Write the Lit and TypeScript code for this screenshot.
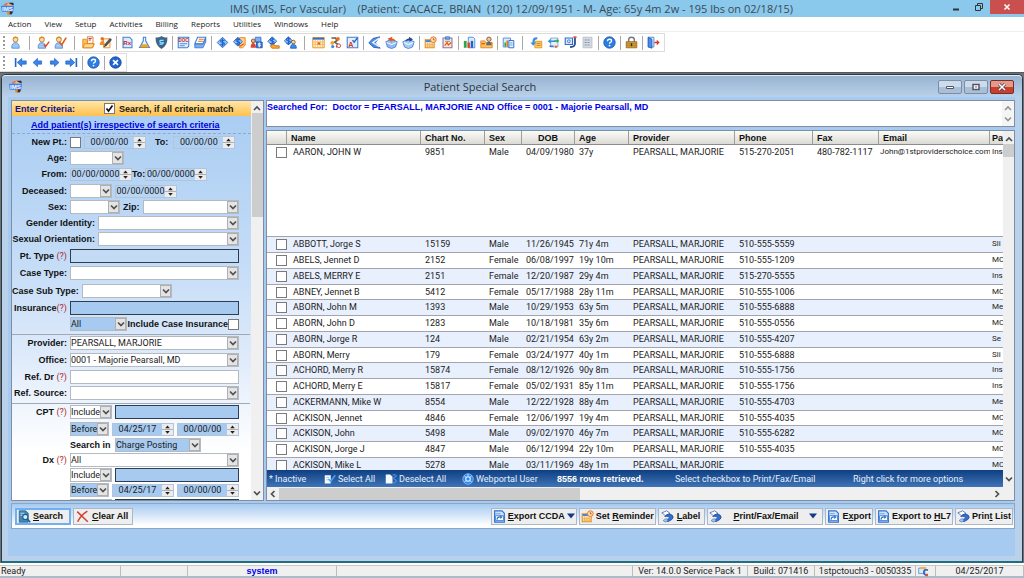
import { LitElement, html, svg, css, nothing, TemplateResult } from "lit";
import { customElement, property } from "lit/decorators.js";
import { classMap } from "lit/directives/class-map.js";

/* ---------- icons (16 x 16 grid) ---------- */
const head = (x: number, y: number) => svg`
  <circle cx=${x} cy=${y} r="3" fill="#fbd9a8" stroke="#b5701c"/>
  <path d="M${x - 3.4} ${y - 0.6}q0-3.4 3.4-3.4t3.4 3.4q-1.6-1.6-3.4-1.4t-3.4 1.4z" fill="#e08a1a"/>
  <path d="M${x - 4.5} ${y + 10.5}q-.6-6.5 4.5-6.8 5.1.3 4.5 6.8z" fill="#9cc8f6" stroke="#4b87d4"/>`;
const page = svg`<path d="M2.5 1.5h8l3 3v10h-11z" fill="#dbeafc" stroke="#3f7ed0" stroke-width="1.3"/>`;
const dollar = (x: number, y: number, r = 5.5) => svg`
  <path d="M${x} ${y - r}l${r} ${r}-${r} ${r}-${r}-${r}z" fill="#8fc0f8" stroke="#1a5fc0"/>
  <path d="M${x + 2.6} ${y - 2.4}q-4.800-1.600-5 .6 0 1.200 2.500 1.700 2.400.6 2.200 2-.6 2.100-5 .7M${x} ${y - 5}v10" fill="none" stroke="#1f62c8" stroke-width="1.4"/>`;
const printer = svg`
  <path d="M1 3.500l6-2.500 4 3-5.500 3z" fill="#fff" stroke="#3c6db5"/>
  <path d="M4.500 8q5-5 9.500-1.500 2.500 3-1 5.500l-4.500 2.500-3-2 3-1.500q3-1 1.500-2.500-2-1-5.500-.5z" fill="#2f6fd0" stroke="#17408c" stroke-width=".8"/>
  <path d="M2.500 13l4-2.500 2.500 2-3.500 2.500z" fill="#9fc4f2" stroke="#3c6db5" stroke-width=".7"/>`;
const exportDoc = svg`
  <path d="M2 1h9l3 3v11h-12z" fill="#cfe3fb" stroke="#2f74d0" stroke-width="1.4"/>
  <path d="M2.500 4.500h7" stroke="#7fb0ee" stroke-width="1.500"/>
  <path d="M3 7h10v6h-10z" fill="#fff" stroke="#2f74d0"/>
  <path d="M5 12q0-3.500 4-3.500" fill="none" stroke="#2f74d0" stroke-width="1.500"/><path d="M8.500 6.500l3.500 2-3 2.500z" fill="#2f74d0"/>`;
const calClock = svg`
  <path d="M1.500 4.500h11v10h-11z" fill="#fff3d6" stroke="#e08a1a" stroke-width="1.3"/>
  <path d="M2 5h10v2.500h-10z" fill="#3f86df"/><path d="M4.500 8v6M7.300 8v6M10 8v6M2 10.200h10M2 12.400h10" stroke="#f0a63c"/>
  <circle cx="11.500" cy="4.500" r="3.500" fill="#ffe2b8" stroke="#e8711c" stroke-width="1.2"/><path d="M11.500 2.500v2.300h1.800" fill="none" stroke="#c2410c"/>`;

const ICONS: Record<string, unknown> = {
  logo: svg`<circle cx="10.500" cy="3.500" r="2.800" fill="#f3b48e"/><path d="M3 4q1-3.500 6-3.200l-2.500 4.200z" fill="#e9774c"/><path d="M9 .8l6 .2 1 3-3.500-1z" fill="#2b2b2b"/>
    <path d="M0 4.500h16l-1 7.500h-14z" fill="#3e7ff0"/><text x="8" y="11" text-anchor="middle" font-family="Liberation Sans" font-weight="700" font-size="7.500" fill="#fff">IMS</text>
    <circle cx="9.500" cy="13.500" r="2.200" fill="#f08a24"/><path d="M11 11.500l4 .5-2 3.500-2.500-.5z" fill="#333"/>`,
  person: head(8, 4.5),
  personCheck: svg`${head(6, 4.5)}<path d="M8.500 10.500l2 2.500 4.500-6" fill="none" stroke="#e0441c" stroke-width="1.700"/>`,
  personCheck2: svg`${head(6, 4.5)}<path d="M6.500 7.500l3 3.500 5.500-9" fill="none" stroke="#e8541c" stroke-width="2"/>`,
  folder: svg`<path d="M6.500 1h7v9h-7z" fill="#fff" stroke="#d9681d"/><path d="M8 3h4M8 5h3" stroke="#d23c28" stroke-width="1.3"/><path d="M1 4h4l1.500 2v3h6l2.500 1-2 4.500h-12z" fill="#ffc35c" stroke="#e07d12"/><path d="M3 9.500h12l-2.500 5h-11z" fill="#ffd98c" stroke="#e07d12"/>`,
  edit: svg`<path d="M5.500 3.500h8v11h-8z" fill="#fff1d8" stroke="#e07d12"/><circle cx="4" cy="3.500" r="2.200" fill="#e8711c"/><path d="M1 11q0-5 3-5t3 5z" fill="#f08c2e"/><path d="M6.500 13.500l1-3.500 6-7 2 1.500-6 7z" fill="#555" stroke="#222" stroke-width=".6"/>`,
  rx: svg`${page}<text x="7.700" y="11.500" text-anchor="middle" font-family="Liberation Sans" font-weight="700" font-size="7.500" fill="#c8281e">Rx</text>`,
  flask: svg`<path d="M6 1.500h4M6.500 2v4l-4.500 8h12l-4.500-8v-4" fill="#e6f2ff" stroke="#3f7ed0" stroke-width="1.3"/><path d="M4.500 10h7l2 4h-11z" fill="#f6a21c"/>`,
  shield: svg`<path d="M8 1q3.500 2 6.500 1.500 .5 8.500-6.500 12.500-7-4-6.500-12.500 3 .5 6.500-1.500z" fill="#2b6a9c" stroke="#53606d" stroke-width="1.500"/><path d="M10.500 5.500q-5-.8-4.500 1.500t4 1q.5 2.700-4.500 2" fill="none" stroke="#9fe0ff" stroke-width="1.500"/>`,
  doc: svg`<path d="M1.500 1.500h13v11l-2 2h-11z" fill="#e3effd" stroke="#3f7ed0" stroke-width="1.3"/><text x="8" y="7.500" text-anchor="middle" font-family="Liberation Sans" font-weight="700" font-size="5.500" fill="#c8281e">DOC</text><path d="M3.500 9.500h9M3.500 12h6" stroke="#4b87d4" stroke-width="1.2"/>`,
  scan: svg`<path d="M4.500 1.500h10l-3.500 8h-10z" fill="#fff" stroke="#3f7ed0" stroke-width="1.3"/><path d="M6 4h6M5 6.500h6" stroke="#e8711c" stroke-width="1.2"/><path d="M1 10h10l3.500-7v4l-3.500 7.500h-10z" fill="#7fb0ee" stroke="#2f6fd0"/>`,
  dollar: dollar(8, 8, 6.5),
  dollarNote: svg`<path d="M8 2h7v9l-3 3.500h-4z" fill="#ffd08a" stroke="#e07d12"/>${dollar(6, 7)}<path d="M8.500 12.500l5-3" stroke="#e8541c" stroke-width="1.500"/>`,
  people: svg`<path d="M6.500 1.500h7v6h-7z" fill="#7fb0ee" stroke="#2f6fd0"/><circle cx="4" cy="6" r="2.300" fill="#f3b67a" stroke="#6b4420"/><path d="M.8 14.500q0-6 3.200-6t3.500 6z" fill="#d8463a"/><path d="M8 7.500h7v7h-7z" fill="#3b78d8" stroke="#1a4fa8"/><path d="M13 9.200q-3-.8-3 .6t3 1.300q0 2-3.200 1M11.500 8v6" fill="none" stroke="#fff"/>`,
  dollarHand: svg`${dollar(6.5, 6.5)}<path d="M4 12q4-3 7 0h4v3h-9z" fill="#f6a83c" stroke="#d0670e"/>`,
  dollarPerson: svg`${dollar(5.5, 6, 5)}<circle cx="11.500" cy="7.500" r="2.300" fill="#fbd9a8" stroke="#7a4a1c"/><path d="M8 15q0-5 3.500-5t3.700 5z" fill="#3b8be6" stroke="#1a5fc0"/>`,
  calendar: svg`<path d="M1 2h14v12.500h-14z" fill="#fff6df" stroke="#e8951c" stroke-width="1.2"/><path d="M1 2h14v2.500h-14z" fill="#3a6cc0"/><path d="M4 5v9M7 5v9M10 5v9M13 5v9M1.500 7.500h13M1.500 10.500h13" stroke="#f6b45a"/><path d="M7 8h3v2.500h-3z" fill="#e8541c"/>`,
  branch: svg`<path d="M3 2.500h5l2 3-3 2 4 3-2 3.500" fill="none" stroke="#6b5b50" stroke-width="2"/><circle cx="11" cy="3.500" r="2.300" fill="#e8711c"/><circle cx="4" cy="8.500" r="2.300" fill="#f6a21c"/><circle cx="12" cy="12" r="2.300" fill="#fff" stroke="#d8463a" stroke-width="1.2"/><circle cx="4.500" cy="13" r="2" fill="#3b8be6"/>`,
  aCheck: svg`<path d="M1.500 1.500h13v13h-13z" fill="#e3effd" stroke="#3f7ed0" stroke-width="1.3"/><text x="6" y="13" text-anchor="middle" font-family="Liberation Sans" font-weight="700" font-size="9" fill="#d8361e">A</text><path d="M8 5l2 2.500 4-5" fill="none" stroke="#2563c9" stroke-width="1.700"/>`,
  layers: svg`<path d="M14.500 1l-8.500 2-5 5.500 6 5.500 8 1-6-6.500z" fill="#4f8ee6" stroke="#1d56b4"/><path d="M14 2.500l-8 5.500 8 5" fill="none" stroke="#eaf3ff" stroke-width="1.8"/>`,
  boxIn: svg`<path d="M1 7l7-3 7 3-2 6.500-5 2-5-2z" fill="#8fbcf2" stroke="#3a76cc"/><path d="M2 8l6 2.500 6-2.500" fill="none" stroke="#fff" stroke-width="1.2"/><path d="M3 3.500l6-2.500-.5 2q4 0 4 4-2-2-4.500-1.500l.5 2z" fill="#e8541c"/>`,
  boxOut: svg`<path d="M1 7l7-3 7 3-2 6.500-5 2-5-2z" fill="#a9ccf6" stroke="#3a76cc"/><path d="M2 8l6 2.500 6-2.500" fill="none" stroke="#fff" stroke-width="1.2"/><path d="M13.500 4l-5-3 .3 2q-4 0-4.300 4 2-2 4.800-1.500v2z" fill="#23498f"/>`,
  calClock,
  clip: svg`<path d="M2.500 2.500h11v12h-11z" fill="#ffe7c0" stroke="#8a6fb8" stroke-width="1.3"/><path d="M5.500 1h5v3h-5z" fill="#7fb0ee" stroke="#2f6fd0"/><path d="M5 6.500h6" stroke="#4b87d4"/><path d="M4.500 12l3-4 1.500 3 3.500-3" fill="none" stroke="#e8541c" stroke-width="1.500"/>`,
  chart: svg`<path d="M6.500 1.500h6l2 2v11h-8z" fill="#dbeafc" stroke="#3f7ed0"/><path d="M1 6h3.500v8.500h-3.500z" fill="#2ba84a"/><path d="M5.500 8h3v6.500h-3z" fill="#e0441c"/><path d="M9.500 6h3v8.500h-3z" fill="#2563c9"/>`,
  folderPerson: svg`<path d="M1 6h5l1 2h8v6.500h-14z" fill="#ffc35c" stroke="#e07d12"/><circle cx="11" cy="4" r="2.700" fill="#f3c79a" stroke="#7a4a1c"/><path d="M7.500 11.500q0-4.500 3.500-4.500t3.500 4.500z" fill="#5a6b80"/><path d="M2 9.500h4" stroke="#e0441c" stroke-width="1.500"/>`,
  chartClip: svg`<path d="M1.500 2.500h9v11h-9z" fill="#dbeafc" stroke="#3f7ed0"/><path d="M3 8h2v5h-2z" fill="#2ba84a"/><path d="M5.500 5.500h2v7.500h-2z" fill="#e07d12"/><path d="M8.500 5.500h6v9h-6z" fill="#eaf3ff" stroke="#2f6fd0" stroke-width="1.2"/><path d="M10 8.500h3M10 11h3" stroke="#4b87d4"/>`,
  noteArrow: svg`<path d="M6 6.500h8.500v8h-8.500z" fill="#ffcf66" stroke="#e08a1a"/><path d="M8 9h5M8 11.500h5" stroke="#b5701c"/><path d="M9 1.500q-6.500-.5-6 6.500h-2.500l3.500 4 3.500-4h-2q0-4 3.500-4z" fill="#3b8be6"/>`,
  sync: svg`<path d="M4.500 2.500h9v11h-9z" fill="#e3effd" stroke="#7a9cc8"/><path d="M1 6.500l3.500-3v2h6v2h-6v2z" fill="#3b8be6"/><path d="M15 6l-3-2.500v1.700h-3v2h3v1.500z" fill="#2ba84a"/><path d="M9 12l2 3 2-3z" fill="#e8541c"/><path d="M3 12.500h5" stroke="#2563c9" stroke-width="1.500"/>`,
  frame: svg`<path d="M1.500 2.500h9v8h-9z" fill="#dbeafc" stroke="#2f6fd0" stroke-width="1.4"/><circle cx="6" cy="6.500" r="1.800" fill="none" stroke="#3b6fb8"/><path d="M13.500 1v9q-1 4-6 3.500" fill="none" stroke="#2b4d8f" stroke-width="2.200"/><path d="M11.500 1.500h4" stroke="#e8541c" stroke-width="2"/>`,
  sheet: svg`<path d="M2.500 1.500h11v13h-11z" fill="#d5dae2" stroke="#b4bcc8"/><path d="M4.500 5h7M4.500 8h7M4.500 11h7" stroke="#8494ac" stroke-width="1.3" stroke-dasharray="2.500 1"/>`,
  help: svg`<circle cx="8" cy="8" r="7" fill="#2b7de4" stroke="#174fa8"/><path d="M5.500 6.500q0-2.500 2.500-2.500t2.500 2q0 1.200-1.300 1.900-1.200.6-1.200 1.600" fill="none" stroke="#fff" stroke-width="1.600"/><circle cx="8" cy="11.800" r="1.100" fill="#fff"/>`,
  lock: svg`<path d="M4.500 7.500v-3q0-3 3.500-3t3.500 3v3" fill="none" stroke="#777" stroke-width="1.700"/><path d="M1.500 7h13v7.500h-13z" fill="#d9a13a" stroke="#8f651c"/><path d="M2 9.500h12M2 12h12" stroke="#a87825"/><path d="M7.200 9h1.600v3.500h-1.600z" fill="#3a2a10"/>`,
  exit: svg`<path d="M1.500 1.500h7v12h-7z" fill="#dbeafc" stroke="#3f7ed0"/><path d="M1.500 1.500l4.500 2.500v11l-4.500-1.500z" fill="#4b8fe4" stroke="#1d56b4"/><path d="M9 7.200h3v-2.500l3.500 3.300-3.500 3.300v-2.500h-3z" fill="#d8361e"/>`,
  first: svg`<path d="M2 2.500v11" stroke="#2563c9" stroke-width="2"/><path d="M4 8l5.500-5v3h5.500v4h-5.500v3z" fill="#3b86ee" stroke="#1a55b8" stroke-width=".8"/>`,
  prev: svg`<path d="M2.500 8l5.500-5v3h5v4h-5v3z" fill="#3b86ee" stroke="#1a55b8" stroke-width=".8"/>`,
  next: svg`<path d="M13.500 8l-5.500-5v3h-5v4h5v3z" fill="#3b86ee" stroke="#1a55b8" stroke-width=".8"/>`,
  last: svg`<path d="M14 2.500v11" stroke="#2563c9" stroke-width="2"/><path d="M12 8l-5.500-5v3h-5.500v4h5.500v3z" fill="#3b86ee" stroke="#1a55b8" stroke-width=".8"/>`,
  cancel: svg`<circle cx="8" cy="8" r="7" fill="#1f66d0" stroke="#123f94"/><path d="M5 5l6 6M11 5l-6 6" stroke="#fff" stroke-width="2"/>`,
  printer,
  exportDoc,
  find: svg`<path d="M1.500 1h8l3 3v11h-11z" fill="#3f87b8" stroke="#2b6a96"/><path d="M3 4h5M3 6.500h3" stroke="#d8ecfa"/><circle cx="9" cy="8.500" r="3.200" fill="#d6efff" stroke="#1f5f8f" stroke-width="1.4"/><path d="M11.500 11l3.500 4" stroke="#1f5f8f" stroke-width="2"/>`,
  clear: svg`<path d="M1.500 2l13 12.500M14 1.500q-8 5-12 13" fill="none" stroke="#d2402c" stroke-width="1.800"/>`,
  selectAll: svg`<path d="M1 3h8v11h-8z" fill="#f4f9ff"/><path d="M3 6h4M3 9h4" stroke="#9ab6dc"/><path d="M6 8l3 3 6-8" fill="none" stroke="#4aa0ff" stroke-width="2"/>`,
  deselectAll: svg`<path d="M1 2h6l3 3v9h-9z" fill="#f4f9ff"/><path d="M10 3q4-2 5 1l-4 3 4 3q-1 4-4 3" fill="none" stroke="#4a8ee0" stroke-width="1.500"/>`,
  globe: svg`<circle cx="8" cy="8" r="7" fill="#2e86f0" stroke="#8cc4ff"/><circle cx="8" cy="8" r="3" fill="none" stroke="#e6f3ff" stroke-width="1.500"/><path d="M3 4l3 2M13 4l-3 2M3 12l3-2M13 12l-3-2M8 1v4" stroke="#cfe6ff" stroke-width="1.2"/>`,
  user: svg`<path d="M1 3h9v8h-9z" fill="#dbeafc" stroke="#3f7ed0"/><path d="M3 1.500h9v3h-9z" fill="#f6b23c"/><path d="M14.500 6q-6-2-6 3t6 4" fill="none" stroke="#2563c9" stroke-width="2.500"/><path d="M13 10l2 5h-5z" fill="#e8541c"/>`,
};

const icon = (name: string, cls = "ico") =>
  html`<svg class=${cls} viewBox="0 0 16 16" aria-hidden="true">${ICONS[name]}</svg>`;

const chevron = (dir: "up" | "down" | "left" | "right", cls = "chev") => {
  const d = { up: "M2 7l3-3 3 3", down: "M2 3.500l3 3 3-3", left: "M6.500 2l-3 3 3 3", right: "M3.500 2l3 3-3 3" }[dir];
  return html`<svg class=${cls} viewBox="0 0 10 10" aria-hidden="true"><path d=${d} fill="none" stroke="#505050" stroke-width="1.700"/></svg>`;
};

const baseStyles = css`
  :host { box-sizing: border-box; }
  *, *::before, *::after { box-sizing: border-box; }
  button, input, select, textarea { font: inherit; color: inherit; margin: 0; padding: 0; border-radius: 0; outline: none; }
  .ico { width: 13px; height: 13px; flex: none; display: block; }
  .chev { width: 10px; height: 10px; display: block; flex: none; }
  .tick {
    appearance: none; width: 11px; height: 11px; flex: none; display: block;
    background: #fff center / 9px 9px no-repeat; border: 1px solid #7a7a7a;
  }
  .tick:checked {
    background-image: url("data:image/svg+xml,%3Csvg xmlns='http://www.w3.org/2000/svg' viewBox='0 0 9 9'%3E%3Cpath d='M1.500 4.500l2 2.500 4-5.500' fill='none' stroke='%23111' stroke-width='1.700'/%3E%3C/svg%3E");
  }
`;

/* ---------- toolbars ---------- */
@customElement("ims-toolbar")
export class ImsToolbar extends LitElement {
  @property({ attribute: false }) items: string[] = [];

  static styles = [baseStyles, css`
    :host { display: flex; }
    .bar {
      display: flex; align-items: center; gap: 4px; height: 19px; padding: 0 4px 0 3px;
      border: 1px solid #dcdcdc; border-left: 0; background: #fff;
    }
    .grip { width: 2px; height: 13px; background: repeating-linear-gradient(#9a9a9a 0 2px, transparent 2px 4px); }
    .sep { width: 1px; height: 14px; background: #a8a8a8; }
    .sep.wide { margin: 0 3px; }
    .sep.blank { background: none; }
    .tool { border: 0; background: none; display: block; }
  `];

  render() {
    return html`<div class="bar" role="toolbar"><span class="grip"></span>
      ${this.items.map((i) =>
        i === "|" || i === "||" || i === ""
          ? html`<span class=${classMap({ sep: true, wide: i === "||", blank: i === "" })}></span>`
          : html`<button class="tool" aria-label=${i}>${icon(i)}</button>`)}
    </div>`;
  }
}

/* ---------- criteria form ---------- */
@customElement("criteria-panel")
export class CriteriaPanel extends LitElement {
  static styles = [baseStyles, css`
    :host { display: flex; min-height: 0; border: 1px solid #7f8ea3; background: #f0f0f0; font: 9px/12px Roboto, sans-serif; color: #1a1a1a; }
    .form { flex: 1; min-width: 0; overflow: hidden; background: linear-gradient(#a8ccf2, #c4dcf7 40%, #dce9fa 62%, #ffffff 88%); }
    .head {
      display: flex; align-items: center; height: 15px; padding: 0 3px; background: linear-gradient(#ffe6a8, #ffc04d);
      font: bold 9px/12px "Liberation Sans", sans-serif;
    }
    .title { width: 89px; color: #10108c; }
    .head label { padding-left: 4px; }
    .linkrow { height: 18px; padding: 3px 0 0 19px; border-bottom: 1px dashed #8fa9c8; }
    .linkrow a { color: #0000e0; font: bold 9px/12px "Liberation Sans", sans-serif; text-decoration: underline; }
    .row { display: flex; align-items: center; gap: 3px; height: 16px; padding-right: 12px; white-space: nowrap; }
    .row.snug { height: 15px; }
    .mt { margin-top: 1px; }
    .mt2 { margin-top: 2px; }
    .rule { border-top: 1px solid #a0a8b4; margin: 2px 1px 0 0; }
    .lab, .mid { font: bold 9px/12px "Liberation Sans", sans-serif; color: #111; }
    .lab { min-width: 55px; text-align: right; flex: none; }
    .lab.long { min-width: 83px; }
    .q { color: #b02a2a; font: 9px/12px Roboto, sans-serif; }
    .sel { display: grid; height: 14px; border: 1px solid #b4bac2; background: #fff; }
    .sel > * { grid-area: 1 / 1; }
    .sel select { appearance: none; border: 0; background: none; width: 100%; min-width: 0; padding: 0 10px 0 0; line-height: 12px; }
    .drop { justify-self: end; width: 11px; background: #e4e4e4; border: 1px solid #b0b0b0; pointer-events: none; display: grid; place-items: center; }
    .date { display: flex; height: 13px; width: 62px; border: 1px solid #b4c4d8; background: #a6caf0; }
    .date.clear { background: none; }
    .date input { flex: 1; min-width: 0; border: 0; background: none; text-align: center; }
    .spin { width: 11px; flex: none; background: #ececec; }
    .txt { height: 14px; border: 1px solid #b4bac2; background: #fff; flex: 1; min-width: 0; }
    .txt.box { border-color: #2e3d50; }
    .blue, .txt.blue { background: #a6caf0; }
    .txt.clear { background: #c4dbf6; }
    .grow { flex: 1; min-width: 0; }
    .w42 { width: 42px; } .w50 { width: 50px; } .w54 { width: 54px; } .w58 { width: 57px; } .w86 { width: 86px; } .w90 { width: 90px; }
    .right { margin-left: auto; }
    .gap { padding: 0 2px 0 6px; }
    .tight { gap: 0; }
    .tight .lab { margin-right: 3px; }
    .scroll { width: 12px; flex: none; display: flex; flex-direction: column; align-items: center; padding: 2px 0; }
    .thumb { width: 11px; height: 104px; background: #cdcdcd; }
    .fill { flex: 1; }
  `];

  private sel(id: string, value: string, cls: string) {
    return html`<span class="sel ${cls}"><select id=${id} aria-label=${id}><option>${value}</option></select>
      <span class="drop">${chevron("down")}</span></span>`;
  }
  private date(id: string, value: string, cls = "") {
    return html`<span class="date ${cls}"><input id=${id} aria-label=${id} .value=${value}>
      <svg class="spin" viewBox="0 0 12 11" aria-hidden="true"><path d="M0 5.500h12" stroke="#aaa"/><path d="M3.500 4l2.500-3 2.500 3zM3.500 7l2.500 3 2.500-3z" fill="#222"/></svg></span>`;
  }
  private lab(forId: string, text: string, q = false, cls = "") {
    return html`<label class="lab ${cls}" for=${forId}>${text}${q ? html`<span class="q">(?)</span>` : nothing}</label>`;
  }
  private code(prefix: string, first: string) {
    return html`
      ${this.sel(prefix + "-mode", "Include", "w42")}
      <input class="txt box blue" id=${prefix + "-codes"} aria-label=${first}>`;
  }
  private range(prefix: string, cls = "") {
    return html`<div class="row ${cls}"><span class="lab"></span>
      ${this.sel(prefix + "-when", "Before", "w42 blue")}
      ${this.date(prefix + "-from", "04/25/17")}${this.date(prefix + "-to", "00/00/00")}</div>`;
  }

  render() {
    return html`
      <div class="form">
        <div class="head"><span class="title">Enter Criteria:</span>
          <input class="tick" type="checkbox" id="match" checked><label for="match">Search, if all criteria match</label></div>
        <div class="linkrow"><a href="#">Add patient(s) irrespective of search criteria</a></div>
        <div class="row">${this.lab("newpt", "New Pt.:")}<input class="tick" type="checkbox" id="newpt">
          ${this.date("new-from", "00/00/00", "clear")}<label class="mid gap" for="new-to">To:</label>${this.date("new-to", "00/00/00", "clear")}</div>
        <div class="row">${this.lab("age", "Age:")}${this.sel("age", "", "w54")}</div>
        <div class="row tight">${this.lab("born-from", "From:")}${this.date("born-from", "00/00/0000", "clear")}<label class="mid" for="born-to">To:</label>${this.date("born-to", "00/00/0000", "clear")}</div>
        <div class="row mt">${this.lab("deceased", "Deceased:")}${this.sel("deceased", "", "w42")}${this.date("deceased-on", "00/00/0000", "clear")}</div>
        <div class="row">${this.lab("sex", "Sex:")}${this.sel("sex", "", "w50")}<label class="mid" for="zip">Zip:</label>${this.sel("zip", "", "grow")}</div>
        <div class="row">${this.lab("gender", "Gender Identity:", false, "long")}${this.sel("gender", "", "grow")}</div>
        <div class="row">${this.lab("orientation", "Sexual Orientation:", false, "long")}${this.sel("orientation", "", "grow")}</div>
        <div class="row mt">${this.lab("pttype", "Pt. Type ", true)}<input class="txt box clear" id="pttype"></div>
        <div class="row mt">${this.lab("casetype", "Case Type:")}${this.sel("casetype", "", "grow")}</div>
        <div class="row mt2">${this.lab("casesub", "Case Sub Type:")}${this.sel("casesub", "", "w90")}</div>
        <div class="row mt">${this.lab("insurance", "Insurance", true)}<input class="txt box blue" id="insurance"></div>
        <div class="row tight">${this.lab("ins-kind", "")}${this.sel("ins-kind", "All", "w58 blue")}<label class="mid right" for="ins-case">Include Case Insurance</label><input class="tick" type="checkbox" id="ins-case"></div>
        <div class="rule"></div>
        <div class="row">${this.lab("provider", "Provider:")}${this.sel("provider", "PEARSALL, MARJORIE", "grow")}</div>
        <div class="row mt">${this.lab("office", "Office:")}${this.sel("office", "0001 - Majorie Pearsall, MD", "grow")}</div>
        <div class="row mt">${this.lab("refdr", "Ref. Dr ", true)}<input class="txt" id="refdr"></div>
        <div class="row">${this.lab("refsrc", "Ref. Source:")}${this.sel("refsrc", "", "grow")}</div>
        <div class="rule"></div>
        <div class="row">${this.lab("cpt-codes", "CPT ", true)}${this.code("cpt", "CPT codes")}</div>
        ${this.range("cpt", "mt")}
        <div class="row snug"><span class="lab"></span><label class="mid w42" for="searchin">Search in</label>${this.sel("searchin", "Charge Posting", "w86 blue")}</div>
        <div class="row snug">${this.lab("dx", "Dx ", true)}${this.sel("dx", "All", "grow")}</div>
        <div class="row snug"><span class="lab"></span>${this.code("dx", "Dx codes")}</div>
        ${this.range("dx")}
        <div class="row"><span class="lab"></span>${this.code("proc", "Procedure codes")}</div>
      </div>
      <div class="scroll">${chevron("up")}<span class="thumb"></span><span class="fill"></span>${chevron("down")}</div>`;
  }
}

/* ---------- results ---------- */
interface Patient { name: string; chart: string; sex: string; dob: string; age: string; phone: string; fax?: string; email?: string; last: string; }
const p = (name: string, chart: string, sex: string, dob: string, age: string, phone: string, last: string, fax = "", email = ""): Patient =>
  ({ name, chart, sex, dob, age, phone, last, fax, email });

const PATIENTS: Patient[] = [
  p("AARON, JOHN W", "9851", "Male", "04/09/1980", "37y", "515-270-2051", "Ins", "480-782-1117", "John@1stproviderschoice.com"),
  p("ABBOTT, Jorge S", "15159", "Male", "11/26/1945", "71y 4m", "510-555-5559", "Sli"),
  p("ABELS, Jennet D", "2152", "Female", "06/08/1997", "19y 10m", "510-555-1209", "MC"),
  p("ABELS, MERRY E", "2151", "Female", "12/20/1987", "29y 4m", "515-270-5555", "Ins"),
  p("ABNEY, Jennet B", "5412", "Female", "05/17/1988", "28y 11m", "510-555-1006", "MC"),
  p("ABORN, John M", "1393", "Male", "10/29/1953", "63y 5m", "510-555-6888", "Me"),
  p("ABORN, John D", "1283", "Male", "10/18/1981", "35y 6m", "510-555-0556", "MC"),
  p("ABORN, Jorge R", "124", "Male", "02/21/1954", "63y 2m", "510-555-4207", "Se"),
  p("ABORN, Merry", "179", "Female", "03/24/1977", "40y 1m", "510-555-6888", "Sli"),
  p("ACHORD, Merry R", "15874", "Female", "08/12/1926", "90y 8m", "510-555-1756", "Ins"),
  p("ACHORD, Merry E", "15817", "Female", "05/02/1931", "85y 11m", "510-555-1756", "Ins"),
  p("ACKERMANN, Mike W", "8554", "Male", "12/22/1928", "88y 4m", "510-555-4703", "Me"),
  p("ACKISON, Jennet", "4846", "Female", "12/06/1997", "19y 4m", "510-555-4035", "MC"),
  p("ACKISON, John", "5498", "Male", "09/02/1970", "46y 7m", "510-555-6282", "MC"),
  p("ACKISON, Jorge J", "4847", "Male", "06/12/1994", "22y 10m", "510-555-4035", "MC"),
  p("ACKISON, Mike L", "5278", "Male", "03/11/1969", "48y 1m", "", "MC"),
];

@customElement("results-panel")
export class ResultsPanel extends LitElement {
  static styles = [baseStyles, css`
    :host { display: flex; flex-direction: column; gap: 3px; min-width: 0; min-height: 0; font: 9px/12px Roboto, sans-serif; color: #222; }
    .searched { display: flex; height: 27px; border: 1px solid #7f8ea3; background: #fff; flex: none; }
    textarea { flex: 1; border: 0; resize: none; overflow: hidden; background: none; color: #0000e6; font: bold 9px/12px "Liberation Sans", sans-serif; }
    .arrows { width: 12px; background: #f0f0f0; display: flex; flex-direction: column; justify-content: space-between; align-items: center; padding: 2px 0; opacity: .6; }
    .grid { flex: 1; min-height: 0; display: flex; flex-direction: column; border: 1px solid #7f8ea3; background: #f0f0f0; }
    .upper { flex: 1; min-height: 0; display: flex; }
    .main { flex: 1; min-width: 0; display: flex; flex-direction: column; }
    .rows { flex: 1; min-height: 0; overflow: hidden; background: #fff; }
    table { width: 100%; table-layout: fixed; border-collapse: separate; border-spacing: 0; }
    th { height: 14px; padding: 0 0 0 4px; text-align: left; font: bold 9px/12px "Liberation Sans", sans-serif; color: #111; background: linear-gradient(#fbfbf9, #dcdad4); border-right: 1px solid #9d9d9d; border-bottom: 1px solid #8c8c8c; overflow: hidden; white-space: nowrap; }
    th.mid { text-align: center; padding: 0; }
    th:last-child { padding-left: 2px; border-right: 0; }
    td { height: 16px; padding: 0 0 0 4px; border-bottom: 1px solid #a4a4ac; overflow: hidden; white-space: nowrap; vertical-align: top; line-height: 14px; }
    tr.short td { height: 15px; }
    tr.open td { height: 92px; line-height: 14px; }
    tr.alt td { background: #e8f0fe; }
    td.pick { padding-left: 9px; }
    td .tick { margin-top: 2px; }
    td.name { padding-left: 6px; }
    td.dob { padding-left: 4px; }
    td.email { padding-left: 1px; font-size: 8px; }
    td:last-child { padding-left: 2px; font-size: 8px; }
    .c0 { width: 20px; } .c1 { width: 134px; } .c2 { width: 64px; } .c3 { width: 37px; } .c4 { width: 53px; } .c5 { width: 54px; }
    .c6 { width: 106px; } .c7 { width: 78px; } .c8 { width: 66px; } .c9 { width: 111px; }
    .legend {
      flex: none; height: 17px; display: grid; grid-template-columns: 55fr 61fr 77fr 95fr 118fr 178fr 150fr; align-items: center;
      padding-left: 2px; color: #e6f0fc; background: linear-gradient(#0e3f82, #3f74b6); white-space: nowrap;
    }
    .legend span { display: flex; align-items: center; gap: 2px; }
    .legend .ico { width: 12px; height: 12px; }
    .legend b { font: bold 9px/12px "Liberation Sans", sans-serif; color: #fff; }
    .vbar { width: 11px; flex: none; display: flex; flex-direction: column; align-items: center; padding: 3px 0; }
    .vthumb { width: 11px; height: 13px; background: #cdcdcd; }
    .fill { flex: 1; }
    .hbar { height: 13px; flex: none; display: flex; align-items: center; padding: 0 12px 0 1px; }
    .hthumb { width: 41%; height: 12px; background: #cdcdcd; margin-left: 1px; }
  `];

  render() {
    const heads = ["", "Name", "Chart No.", "Sex", "DOB", "Age", "Provider", "Phone", "Fax", "Email", "Pa"];
    return html`
      <div class="searched"><textarea readonly aria-label="Searched for" .value=${"Searched For:  Doctor = PEARSALL, MARJORIE AND Office = 0001 - Majorie Pearsall, MD"}></textarea>
        <div class="arrows">${chevron("up")}${chevron("down")}</div></div>
      <div class="grid">
        <div class="upper">
          <div class="main">
            <div class="rows"><table>
              <colgroup>${heads.map((_, i) => html`<col class="c${i}">`)}</colgroup>
              <thead><tr>${heads.map((h) => html`<th class=${h === "DOB" ? "mid" : ""}>${h}</th>`)}</tr></thead>
              <tbody>${PATIENTS.map((r, i) => this.row(r, i))}</tbody>
            </table></div>
            <div class="legend"><span>* Inactive</span><span>${icon("selectAll")}Select All</span><span>${icon("deselectAll")}Deselect All</span>
              <span>${icon("globe")}Webportal User</span><b>8556 rows retrieved.</b><span>Select checkbox to Print/Fax/Email</span><span>Right click for more options</span></div>
          </div>
          <div class="vbar">${chevron("up")}<span class="vthumb"></span><span class="fill"></span>${chevron("down")}</div>
        </div>
        <div class="hbar">${chevron("left")}<span class="hthumb"></span><span class="fill"></span>${chevron("right")}</div>
      </div>`;
  }

  private row(r: Patient, i: number): TemplateResult {
    return html`<tr class=${classMap({ alt: i % 2 === 1, open: i === 0, short: i > 0 && i % 4 === 0 })}>
      <td class="pick"><input class="tick" type="checkbox" aria-label=${r.name}></td>
      <td class="name">${r.name}</td><td>${r.chart}</td><td>${r.sex}</td><td class="dob">${r.dob}</td><td>${r.age}</td>
      <td>PEARSALL, MARJORIE</td><td>${r.phone}</td><td>${r.fax}</td><td class="email">${r.email}</td><td>${r.last}</td></tr>`;
  }
}

/* ---------- application window ---------- */
@customElement("app-root")
export class AppRoot extends LitElement {
  static styles = [baseStyles, css`
    :host { display: flex; flex-direction: column; height: 100vh; overflow: hidden; background: #fff; color: #222; font: 9px/12px Roboto, sans-serif; }
    .titlebar { display: flex; align-items: center; height: 17px; flex: none; background: #8ac8ec; padding-left: 1px; }
    .titlebar h1 { flex: 1; margin: 0 0 0 65px; text-align: center; font: 11px/17px "Open Sans", sans-serif; color: #3b4a56; white-space: pre; }
    .winbtn { border: 0; background: none; width: 23px; height: 14px; align-self: flex-start; display: grid; place-items: center; }
    .winbtn svg { width: 10px; height: 10px; display: block; }
    .winbtn.close { width: 34px; background: #c9504e; }
    .menu { display: flex; gap: 13px; align-items: center; height: 15px; padding-left: 8px; flex: none; border-bottom: 1px solid #f0f0f0; font: 8px/12px "Open Sans", sans-serif; }
    .menu button { border: 0; background: none; }
    .bars { flex: none; display: flex; flex-direction: column; gap: 1px; padding-top: 1px; }
    .work { flex: 1; min-height: 0; display: flex; padding: 0 1px; background: #6d7277; border-top: 1px solid #55595d; }
    .mdi { flex: 1; min-width: 0; display: flex; flex-direction: column; margin-top: 1px; padding: 0 7px 5px 6px; background: #b9d1ea; border: 1px solid #2b3b45; border-bottom: 2px solid #1f6f80; border-radius: 5px 5px 0 0; }
    .caption { display: flex; align-items: center; height: 22px; flex: none; margin: 0 -7px 0 -6px; padding: 0 8px 0 7px; border-radius: 4px 4px 0 0; border-top: 1px solid #e2ecf6; background: linear-gradient(#99b4d1, #b9d1ea); }
    .caption h2 { flex: 1; margin: 0; text-align: center; font: 11px/20px "Open Sans", sans-serif; color: #2a3440; }
    .capbtns { display: flex; gap: 2px; }
    .capbtn { width: 24px; height: 14px; border: 1px solid #7c8ea4; border-radius: 2px; background: linear-gradient(#cddcec 50%, #a9bfd8 50%); display: grid; place-items: center; }
    .capbtn.close { background: linear-gradient(#e49a88 50%, #c8402c 50%); border-color: #7a2f26; }
    .capbtn svg { width: 10px; height: 8px; display: block; }
    .body { flex: 1; min-height: 0; display: flex; flex-direction: column; background: #a6caf0; padding: 3px 0 27px 3px; gap: 2px; }
    .split { flex: 1; min-height: 0; display: grid; grid-template-columns: 253px minmax(0, 1fr); grid-template-rows: minmax(0, 1fr); gap: 2px; }
    .actions { flex: none; height: 26px; display: flex; align-items: center; gap: 2px; padding: 0 1px 0 3px; border: 1px solid #8ca6c4; background: linear-gradient(#a6caf0, #fff 90%); }
    .act { height: 17px; display: flex; align-items: center; gap: 2px; padding: 0 1px; border: 1px solid #a9b7c8; background: #eeeeee; color: #111; font: bold 9px/12px "Liberation Sans", sans-serif; white-space: nowrap; }
    .act.main { border: 2px solid #6fb0f0; padding: 0 6px 0 1px; }
    .act.roomy { padding: 0 4px 0 2px; gap: 3px; }
    .act.wide { gap: 11px; padding: 0 5px 0 1px; }
    .caret { width: 8px; height: 6px; display: block; }
    .fill { flex: 1; }
    .status { display: flex; height: 13px; flex: none; margin-top: 2px; background: #f0f0f0; border-top: 1px solid #c8c8c8; border-bottom: 2px solid #a8bccb; white-space: nowrap; line-height: 11px; }
    .status > * { border-right: 1px solid #bdbdbd; padding: 0 1px; text-align: center; }
    .s1 { width: 121px; } .s2 { width: 67px; } .s3 { width: 149px; } .s4 { flex: 1; } .s5 { width: 115px; } .s6 { width: 67px; } .s7 { width: 101px; } .s8 { width: 20px; } .s9 { width: 88px; }
    .status .s1 { text-align: left; }
    .status .s3 { font: bold 9px/11px "Liberation Sans", sans-serif; color: #0000e6; }
    .status .ico { height: 11px; }
  `];

  private act(name: string, pre: string, key: string, post: string, extra: { cls?: string; caret?: boolean } = {}) {
    return html`<button class="act ${extra.cls ?? ""}">${icon(name)}<span>${pre}<u>${key}</u>${post}</span>
      ${extra.caret ? html`<svg class="caret" viewBox="0 0 8 6"><path d="M0 0.500h8l-4 5z" fill="#16388c"/></svg>` : nothing}</button>`;
  }

  render() {
    const menus = ["Action", "View", "Setup", "Activities", "Billing", "Reports", "Utilities", "Windows", "Help"];
    const tools = ["person", "||", "personCheck", "personCheck2", "||", "folder", "edit", "|", "rx", "flask", "shield", "|", "doc", "scan", "|",
      "dollar", "dollarNote", "people", "dollarHand", "dollarPerson", "||", "calendar", "branch", "aCheck", "|", "layers", "boxIn", "boxOut", "|",
      "calClock", "clip", "|", "chart", "folderPerson", "|", "chartClip", "||", "noteArrow", "sync", "frame", "sheet", "|", "help", "|", "lock", "|", "exit"];
    const nav = ["", "first", "prev", "next", "last", "|", "help", "|", "cancel"];
    return html`
      <header class="titlebar">${icon("logo")}
        <h1>${"IMS (IMS, For Vascular)    (Patient: CACACE, BRIAN  (120) 12/09/1951 - M- Age: 65y 4m 2w - 195 lbs on 02/18/15)"}</h1>
        <button class="winbtn" aria-label="Minimize"><svg viewBox="0 0 10 10"><path d="M2 7.500h6" stroke="#333" stroke-width="2"/></svg></button>
        <button class="winbtn" aria-label="Restore"><svg viewBox="0 0 10 10"><path d="M1.500 3.500h5v5h-5zM3.500 3v-1.500h5v5h-1.500" fill="none" stroke="#333"/></svg></button>
        <button class="winbtn close" aria-label="Close"><svg viewBox="0 0 10 10"><path d="M2.500 2.500l5 5M7.500 2.500l-5 5" stroke="#fff" stroke-width="1.500"/></svg></button>
      </header>
      <nav class="menu">${menus.map((m) => html`<button>${m}</button>`)}</nav>
      <div class="bars"><ims-toolbar .items=${tools}></ims-toolbar><ims-toolbar .items=${nav}></ims-toolbar></div>
      <main class="work"><section class="mdi">
        <div class="caption">${icon("logo")}<h2>Patient Special Search</h2>
          <div class="capbtns">
            <button class="capbtn" aria-label="Minimize"><svg viewBox="0 0 10 8"><path d="M1.500 3.500h7v2h-7z" fill="#fff" stroke="#556"/></svg></button>
            <button class="capbtn" aria-label="Maximize"><svg viewBox="0 0 10 8"><path d="M2 1.500h6v5h-6z" fill="#fff" stroke="#556" stroke-width="1.500"/><path d="M4 3.500h2v1h-2z" fill="#667"/></svg></button>
            <button class="capbtn close" aria-label="Close"><svg viewBox="0 0 10 8"><path d="M2 1l6 6M8 1l-6 6" stroke="#545" stroke-width="3"/><path d="M2 1l6 6M8 1l-6 6" stroke="#fff" stroke-width="1.500"/></svg></button>
          </div></div>
        <div class="body">
          <div class="split"><criteria-panel></criteria-panel><results-panel></results-panel></div>
          <div class="actions">
            ${this.act("find", "", "S", "earch", { cls: "main" })}${this.act("clear", "", "C", "lear All", { cls: "roomy" })}
            <span class="fill"></span>
            ${this.act("exportDoc", "", "E", "xport CCDA", { caret: true })}${this.act("calClock", "Set ", "R", "eminder")}${this.act("printer", "", "L", "abel", { cls: "roomy" })}
            ${this.act("printer", "", "P", "rint/Fax/Email", { cls: "wide", caret: true })}${this.act("exportDoc", "E", "x", "port")}
            ${this.act("exportDoc", "Export to ", "H", "L7")}${this.act("printer", "Prin", "t", " List")}
          </div>
        </div>
      </section></main>
      <footer class="status"><span class="s1">Ready</span><span class="s2"></span><span class="s3">system</span><span class="s4"></span>
        <span class="s5">Ver: 14.0.0 Service Pack 1</span><span class="s6">Build: 071416</span><span class="s7">1stpctouch3 - 0050335</span>
        <span class="s8">${icon("user")}</span><span class="s9">04/25/2017</span></footer>`;
  }
}
